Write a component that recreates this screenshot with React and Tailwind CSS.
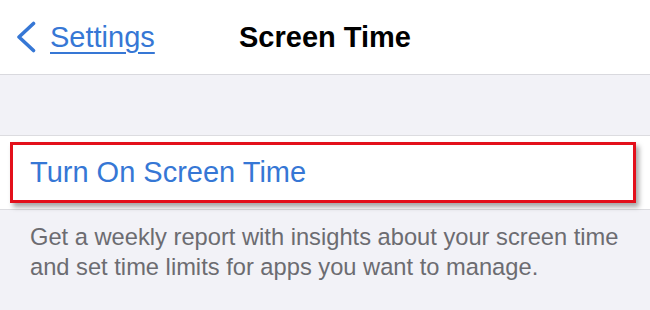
export default function App() {
  return (
    <div
      className="w-[650px] h-[310px] overflow-hidden bg-[#f2f2f7]"
      style={{ fontFamily: '"Liberation Sans", Arial, sans-serif' }}
    >
      {/* nav bar */}
      <div className="h-[75px] bg-white border-b border-[#d9d9de] grid grid-cols-[1fr_auto_1fr] items-center">
        <div className="flex items-center pl-[16px]">
          <svg width="20" height="32" viewBox="0 0 20 32" className="shrink-0">
            <polyline
              points="17.5,2.5 3,16 17.5,29.5"
              fill="none"
              stroke="#3677d5"
              strokeWidth="3.6"
              strokeLinecap="round"
              strokeLinejoin="round"
            />
          </svg>
          <span className="ml-[14px] text-[29px] leading-none text-[#3677d5] underline decoration-[1.5px] underline-offset-[5px]">
            Settings
          </span>
        </div>
        <div className="text-[29px] leading-none font-bold text-black">Screen Time</div>
        <div />
      </div>

      <div className="h-[60px]" />

      {/* row */}
      <div className="h-[75px] bg-white border-y border-[#dcdce0] pl-[10px] pr-[14px] py-[6px]">
        <div className="h-full border-[3.5px] border-[#e3101b] shadow-[3px_4px_5px_rgba(0,0,0,0.35)] flex items-center pl-[17px]">
          <span className="text-[29px] leading-none text-[#3677d5]">Turn On Screen Time</span>
        </div>
      </div>

      <div className="px-[30px] pt-[12px] text-[23.7px] leading-[30px] text-[#6c6c71]">
        Get a weekly report with insights about your screen time and set time limits for apps you want to manage.
      </div>
    </div>
  )
}
